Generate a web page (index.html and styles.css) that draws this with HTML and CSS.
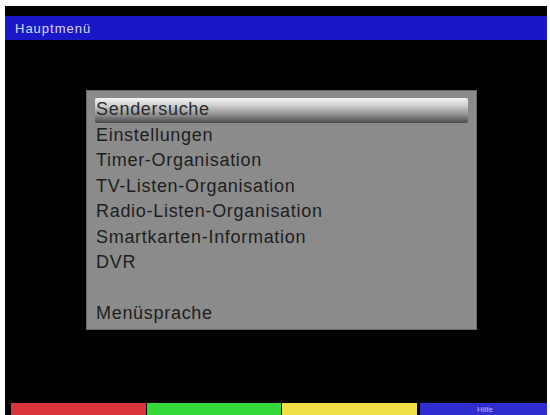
FILE: index.html
```html
<!DOCTYPE html>
<html lang="de">
<head>
<meta charset="utf-8">
<title>Hauptmenü</title>
<link rel="stylesheet" href="styles.css">
</head>
<body>
<div class="screen">
  <div class="titlebar"><span class="title">Hauptmenü</span></div>
  <div class="content">
    <div class="menu">
      <div class="item selected">Sendersuche</div>
      <div class="item">Einstellungen</div>
      <div class="item">Timer-Organisation</div>
      <div class="item">TV-Listen-Organisation</div>
      <div class="item">Radio-Listen-Organisation</div>
      <div class="item">Smartkarten-Information</div>
      <div class="item">DVR</div>
      <div class="item empty"></div>
      <div class="item">Menüsprache</div>
    </div>
  </div>
  <div class="keys">
    <div class="key red"></div>
    <div class="key green"></div>
    <div class="key yellow"></div>
    <div class="key blue"><span class="keylabel">Hilfe</span></div>
  </div>
</div>
</body>
</html>
```
FILE: styles.css
```css
html, body {
  margin: 0;
  padding: 0;
  background: #ffffff;
}
body {
  padding: 6px 3px 0 5px;
  font-family: "Liberation Sans", Arial, sans-serif;
}
.screen {
  width: 542px;
  height: 409px;
  background: #000;
  display: flex;
  flex-direction: column;
}
.titlebar {
  margin-top: 10px;
  height: 24px;
  background: #1818c8;
  display: flex;
  align-items: center;
  padding-left: 10px;
}
.title {
  color: #d8d8ff;
  font-size: 13px;
  letter-spacing: 1px;
}
.content {
  flex: 1;
  padding: 50px 0 0 81px;
}
.menu {
  width: 391px;
  height: 240px;
  box-sizing: border-box;
  background: #8b8b8b;
  border: 1px solid #6a6a6a;
  padding: 6px 8px 0 8px;
}
.item {
  height: 25.5px;
  line-height: 24px;
  font-size: 18px;
  letter-spacing: 0.7px;
  color: #1e1e1e;
  padding-left: 1px;
  white-space: nowrap;
}
.item.selected {
  height: 25px;
  line-height: 23px;
  margin-top: 1px;
  margin-bottom: -0.5px;
  background: linear-gradient(to bottom, #f4f4f4 0%, #d0d0d0 30%, #8a8a8a 70%, #4a4a4a 100%);
  border-radius: 2px;
  color: #2a2a2a;
}
.keys {
  display: flex;
  height: 12px;
  margin: 0 0 0 6px;
  gap: 1px;
}
.key {
  height: 100%;
}
.red { width: 135px; background: #d8343a; }
.green { width: 135px; background: #34d838; }
.yellow { width: 135px; background: #f0e048; }
.blue {
  width: 127px;
  margin-left: 2px;
  background: #2e2ed0;
  display: flex;
  align-items: center;
  justify-content: flex-end;
  padding-right: 54px;
  box-sizing: border-box;
}
.keylabel {
  color: #b8b8ff;
  font-size: 8px;
}
```
